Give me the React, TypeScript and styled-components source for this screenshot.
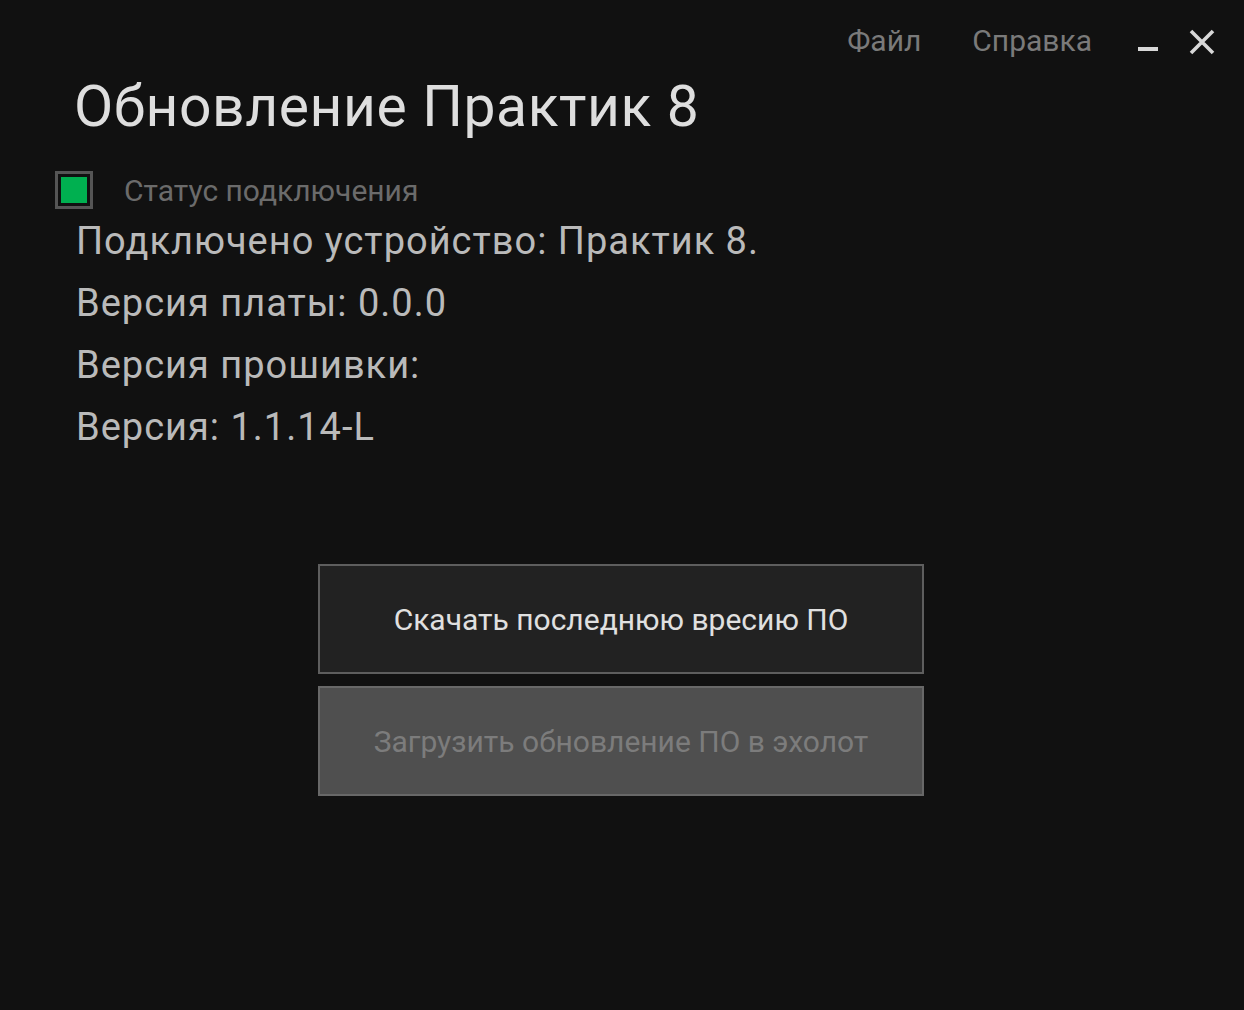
import React from 'react';
import styled, { createGlobalStyle } from 'styled-components';

const GlobalStyle = createGlobalStyle`
  html, body {
    margin: 0;
    padding: 0;
    background: #111111;
  }
  body {
    font-family: Roboto, "Liberation Sans", sans-serif;
  }
`;

const Window = styled.div`
  width: 1244px;
  height: 1010px;
  background: #111111;
  display: flex;
  flex-direction: column;
  box-sizing: border-box;
`;

const TitleBar = styled.div`
  display: flex;
  justify-content: flex-end;
  align-items: center;
  height: 84px;
  padding-right: 25px;
`;

const Menu = styled.nav`
  display: flex;
  gap: 51px;
  margin-right: 39px;
`;

const MenuItem = styled.div`
  color: #7a7a7a;
  font-size: 30px;
  line-height: 1;
  margin-top: -2px;
`;

const WinButton = styled.button<{ $gap?: number }>`
  background: none;
  border: none;
  padding: 0;
  width: 34px;
  height: 34px;
  display: flex;
  align-items: center;
  justify-content: center;
  margin-left: ${p => p.$gap ?? 0}px;
`;

const Content = styled.div`
  padding-left: 55px;
  margin-top: -12px;
  display: flex;
  flex-direction: column;
`;

const Title = styled.h1`
  margin: 0 0 0 19px;
  font-size: 57px;
  font-weight: 400;
  letter-spacing: 0.6px;
  color: #dedede;
  line-height: 70px;
`;

const StatusRow = styled.div`
  display: flex;
  align-items: center;
  margin-top: 29px;
  gap: 31px;
`;

const StatusBox = styled.div`
  width: 38px;
  height: 38px;
  box-sizing: border-box;
  border: 3px solid #555555;
  padding: 3px;
  display: flex;
`;

const StatusFill = styled.div<{ $on: boolean }>`
  flex: 1;
  background: ${p => (p.$on ? '#00b050' : '#555')};
`;

const StatusLabel = styled.span`
  color: #6b6b6b;
  font-size: 30px;
`;

const InfoList = styled.div`
  margin-top: 1px;
  margin-left: 21px;
  display: flex;
  flex-direction: column;
`;

const InfoLine = styled.div`
  color: #bababa;
  font-size: 38px;
  letter-spacing: 1px;
  line-height: 62px;
`;

const Actions = styled.div`
  margin-top: 106px;
  display: flex;
  flex-direction: column;
  align-items: center;
  gap: 12px;
  padding-right: 57px;
`;

const ActionButton = styled.button<{ $disabled?: boolean }>`
  width: 606px;
  height: 110px;
  box-sizing: border-box;
  border: 2px solid ${p => (p.$disabled ? '#686868' : '#5e5e5e')};
  background: ${p => (p.$disabled ? '#4f4f4f' : '#222222')};
  color: ${p => (p.$disabled ? '#7c7c7c' : '#e0e0e0')};
  font-family: Roboto, "Liberation Sans", sans-serif;
  font-size: 30px;
  cursor: ${p => (p.$disabled ? 'default' : 'pointer')};
`;

const info = [
  'Подключено устройство: Практик 8.',
  'Версия платы: 0.0.0',
  'Версия прошивки:',
  'Версия: 1.1.14-L',
];

export default function App() {
  return (
    <>
      <GlobalStyle />
      <Window>
        <TitleBar>
          <Menu>
            <MenuItem>Файл</MenuItem>
            <MenuItem>Справка</MenuItem>
          </Menu>
          <WinButton aria-label="minimize">
            <svg width="24" height="24" viewBox="0 0 24 24">
              <rect x="2" y="17" width="20" height="4" fill="#d8d8d8" />
            </svg>
          </WinButton>
          <WinButton aria-label="close" $gap={20}>
            <svg width="28" height="28" viewBox="0 0 28 28">
              <path d="M3 3 L25 25 M25 3 L3 25" stroke="#d8d8d8" strokeWidth="3.6" />
            </svg>
          </WinButton>
        </TitleBar>
        <Content>
          <Title>Обновление Практик 8</Title>
          <StatusRow>
            <StatusBox>
              <StatusFill $on />
            </StatusBox>
            <StatusLabel>Статус подключения</StatusLabel>
          </StatusRow>
          <InfoList>
            {info.map(line => (
              <InfoLine key={line}>{line}</InfoLine>
            ))}
          </InfoList>
          <Actions>
            <ActionButton>Скачать последнюю вресию ПО</ActionButton>
            <ActionButton $disabled disabled>
              Загрузить обновление ПО в эхолот
            </ActionButton>
          </Actions>
        </Content>
      </Window>
    </>
  );
}
